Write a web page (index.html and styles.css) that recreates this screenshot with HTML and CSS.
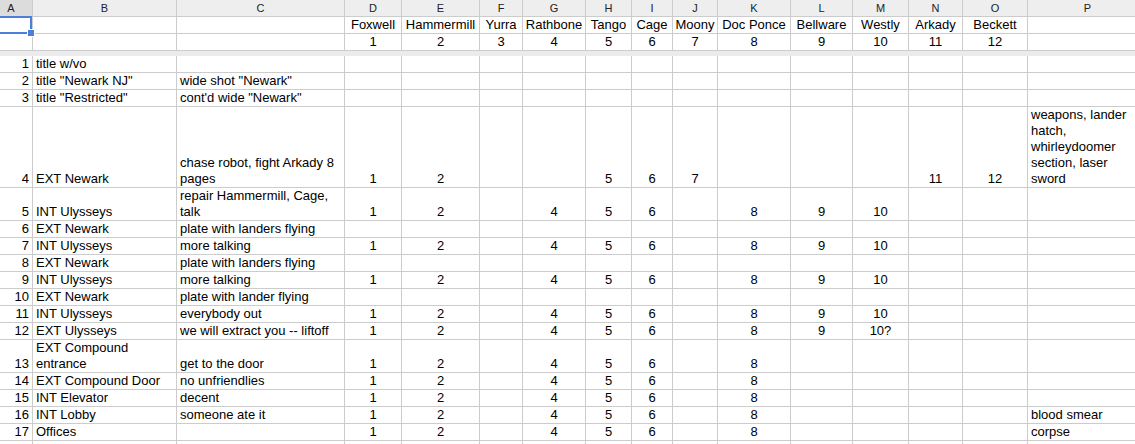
FILE: index.html
```html
<!DOCTYPE html>
<html>
<head>
<meta charset="utf-8">
<title>Scenes</title>
<link rel="stylesheet" href="styles.css">
</head>
<body>
<div class="sheet">
  <div class="h h-sel">A</div><div class="h">B</div><div class="h">C</div><div class="h">D</div><div class="h">E</div><div class="h">F</div><div class="h">G</div><div class="h">H</div><div class="h">I</div><div class="h">J</div><div class="h">K</div><div class="h">L</div><div class="h">M</div><div class="h">N</div><div class="h">O</div><div class="h">P</div>

  <div class="c sel-cell"><span class="sel"><span class="handle"></span></span></div><div class="c"></div><div class="c"></div>
  <div class="c m">Foxwell</div><div class="c m">Hammermill</div><div class="c m">Yurra</div><div class="c m">Rathbone</div><div class="c m">Tango</div><div class="c m">Cage</div><div class="c m">Moony</div><div class="c m">Doc Ponce</div><div class="c m">Bellware</div><div class="c m">Westly</div><div class="c m">Arkady</div><div class="c m">Beckett</div><div class="c"></div>

  <div class="c"></div><div class="c"></div><div class="c"></div>
  <div class="c m">1</div><div class="c m">2</div><div class="c m">3</div><div class="c m">4</div><div class="c m">5</div><div class="c m">6</div><div class="c m">7</div><div class="c m">8</div><div class="c m">9</div><div class="c m">10</div><div class="c m">11</div><div class="c m">12</div><div class="c"></div>

  <div class="freeze"></div>

  <div class="c r">1</div><div class="c">title w/vo</div><div class="c"></div>
  <div class="c m"></div><div class="c m"></div><div class="c m"></div><div class="c m"></div><div class="c m"></div><div class="c m"></div><div class="c m"></div><div class="c m"></div><div class="c m"></div><div class="c m"></div><div class="c m"></div><div class="c m"></div><div class="c"></div>

  <div class="c r">2</div><div class="c">title "Newark NJ"</div><div class="c">wide shot "Newark"</div>
  <div class="c m"></div><div class="c m"></div><div class="c m"></div><div class="c m"></div><div class="c m"></div><div class="c m"></div><div class="c m"></div><div class="c m"></div><div class="c m"></div><div class="c m"></div><div class="c m"></div><div class="c m"></div><div class="c"></div>

  <div class="c r">3</div><div class="c">title "Restricted"</div><div class="c">cont'd wide "Newark"</div>
  <div class="c m"></div><div class="c m"></div><div class="c m"></div><div class="c m"></div><div class="c m"></div><div class="c m"></div><div class="c m"></div><div class="c m"></div><div class="c m"></div><div class="c m"></div><div class="c m"></div><div class="c m"></div><div class="c"></div>

  <div class="c r">4</div><div class="c">EXT Newark</div><div class="c"><span>chase robot, fight Arkady 8<br>pages</span></div>
  <div class="c m">1</div><div class="c m">2</div><div class="c m"></div><div class="c m"></div><div class="c m">5</div><div class="c m">6</div><div class="c m">7</div><div class="c m"></div><div class="c m"></div><div class="c m"></div><div class="c m">11</div><div class="c m">12</div><div class="c"><span>weapons, lander<br>hatch,<br>whirleydoomer<br>section, laser<br>sword</span></div>

  <div class="c r">5</div><div class="c">INT Ulysseys</div><div class="c"><span>repair Hammermill, Cage,<br>talk</span></div>
  <div class="c m">1</div><div class="c m">2</div><div class="c m"></div><div class="c m">4</div><div class="c m">5</div><div class="c m">6</div><div class="c m"></div><div class="c m">8</div><div class="c m">9</div><div class="c m">10</div><div class="c m"></div><div class="c m"></div><div class="c"></div>

  <div class="c r">6</div><div class="c">EXT Newark</div><div class="c">plate with landers flying</div>
  <div class="c m"></div><div class="c m"></div><div class="c m"></div><div class="c m"></div><div class="c m"></div><div class="c m"></div><div class="c m"></div><div class="c m"></div><div class="c m"></div><div class="c m"></div><div class="c m"></div><div class="c m"></div><div class="c"></div>

  <div class="c r">7</div><div class="c">INT Ulysseys</div><div class="c">more talking</div>
  <div class="c m">1</div><div class="c m">2</div><div class="c m"></div><div class="c m">4</div><div class="c m">5</div><div class="c m">6</div><div class="c m"></div><div class="c m">8</div><div class="c m">9</div><div class="c m">10</div><div class="c m"></div><div class="c m"></div><div class="c"></div>

  <div class="c r">8</div><div class="c">EXT Newark</div><div class="c">plate with landers flying</div>
  <div class="c m"></div><div class="c m"></div><div class="c m"></div><div class="c m"></div><div class="c m"></div><div class="c m"></div><div class="c m"></div><div class="c m"></div><div class="c m"></div><div class="c m"></div><div class="c m"></div><div class="c m"></div><div class="c"></div>

  <div class="c r">9</div><div class="c">INT Ulysseys</div><div class="c">more talking</div>
  <div class="c m">1</div><div class="c m">2</div><div class="c m"></div><div class="c m">4</div><div class="c m">5</div><div class="c m">6</div><div class="c m"></div><div class="c m">8</div><div class="c m">9</div><div class="c m">10</div><div class="c m"></div><div class="c m"></div><div class="c"></div>

  <div class="c r">10</div><div class="c">EXT Newark</div><div class="c">plate with lander flying</div>
  <div class="c m"></div><div class="c m"></div><div class="c m"></div><div class="c m"></div><div class="c m"></div><div class="c m"></div><div class="c m"></div><div class="c m"></div><div class="c m"></div><div class="c m"></div><div class="c m"></div><div class="c m"></div><div class="c"></div>

  <div class="c r">11</div><div class="c">INT Ulysseys</div><div class="c">everybody out</div>
  <div class="c m">1</div><div class="c m">2</div><div class="c m"></div><div class="c m">4</div><div class="c m">5</div><div class="c m">6</div><div class="c m"></div><div class="c m">8</div><div class="c m">9</div><div class="c m">10</div><div class="c m"></div><div class="c m"></div><div class="c"></div>

  <div class="c r">12</div><div class="c">EXT Ulysseys</div><div class="c">we will extract you -- liftoff</div>
  <div class="c m">1</div><div class="c m">2</div><div class="c m"></div><div class="c m">4</div><div class="c m">5</div><div class="c m">6</div><div class="c m"></div><div class="c m">8</div><div class="c m">9</div><div class="c m">10?</div><div class="c m"></div><div class="c m"></div><div class="c"></div>

  <div class="c r">13</div><div class="c"><span>EXT Compound<br>entrance</span></div><div class="c">get to the door</div>
  <div class="c m">1</div><div class="c m">2</div><div class="c m"></div><div class="c m">4</div><div class="c m">5</div><div class="c m">6</div><div class="c m"></div><div class="c m">8</div><div class="c m"></div><div class="c m"></div><div class="c m"></div><div class="c m"></div><div class="c"></div>

  <div class="c r">14</div><div class="c">EXT Compound Door</div><div class="c">no unfriendlies</div>
  <div class="c m">1</div><div class="c m">2</div><div class="c m"></div><div class="c m">4</div><div class="c m">5</div><div class="c m">6</div><div class="c m"></div><div class="c m">8</div><div class="c m"></div><div class="c m"></div><div class="c m"></div><div class="c m"></div><div class="c"></div>

  <div class="c r">15</div><div class="c">INT Elevator</div><div class="c">decent</div>
  <div class="c m">1</div><div class="c m">2</div><div class="c m"></div><div class="c m">4</div><div class="c m">5</div><div class="c m">6</div><div class="c m"></div><div class="c m">8</div><div class="c m"></div><div class="c m"></div><div class="c m"></div><div class="c m"></div><div class="c"></div>

  <div class="c r">16</div><div class="c">INT Lobby</div><div class="c">someone ate it</div>
  <div class="c m">1</div><div class="c m">2</div><div class="c m"></div><div class="c m">4</div><div class="c m">5</div><div class="c m">6</div><div class="c m"></div><div class="c m">8</div><div class="c m"></div><div class="c m"></div><div class="c m"></div><div class="c m"></div><div class="c">blood smear</div>

  <div class="c r">17</div><div class="c">Offices</div><div class="c"></div>
  <div class="c m">1</div><div class="c m">2</div><div class="c m"></div><div class="c m">4</div><div class="c m">5</div><div class="c m">6</div><div class="c m"></div><div class="c m">8</div><div class="c m"></div><div class="c m"></div><div class="c m"></div><div class="c m"></div><div class="c">corpse</div>

  <div class="c r"></div><div class="c"></div><div class="c"></div>
  <div class="c m"></div><div class="c m"></div><div class="c m"></div><div class="c m"></div><div class="c m"></div><div class="c m"></div><div class="c m"></div><div class="c m"></div><div class="c m"></div><div class="c m"></div><div class="c m"></div><div class="c m"></div><div class="c"></div>
</div>
</body>
</html>
```
FILE: styles.css
```css
html, body {
  margin: 0;
  padding: 0;
  background: #ffffff;
  overflow: hidden;
}

body {
  width: 1135px;
  height: 444px;
  font-family: "Liberation Sans", Arial, sans-serif;
  font-size: 13px;
  color: #000000;
}

.sheet {
  display: grid;
  grid-template-columns: 43px 144px 168px 57px 78px 43px 63px 46px 41px 45px 73px 62px 56px 54px 65px 120px;
  margin-left: -10px;
  width: 1158px;
}

.h {
  box-sizing: border-box;
  height: 17px;
  background: #eeeeee;
  border-right: 1px solid #cccccc;
  border-bottom: 1px solid #cccccc;
  font-size: 11px;
  line-height: 16px;
  text-align: center;
  color: #222222;
}

.h-sel {
  background: #dcdcdc;
}

.c {
  box-sizing: border-box;
  min-height: 17px;
  border-right: 1px solid #cccccc;
  border-bottom: 1px solid #cccccc;
  padding: 0 3px;
  display: flex;
  align-items: flex-end;
  line-height: 16px;
  white-space: nowrap;
  overflow: hidden;
}

.c.m {
  justify-content: center;
  text-align: center;
}

.c.r {
  justify-content: flex-end;
  padding-right: 3px;
}

.freeze {
  grid-column: 1 / -1;
  height: 5px;
  background: #ebebeb;
}

.sel-cell {
  position: relative;
  overflow: visible;
}

.sel {
  position: absolute;
  top: -1px;
  left: 0;
  right: 0;
  bottom: -1px;
  border: 2px solid #4a7fdc;
  pointer-events: none;
}

.handle {
  position: absolute;
  right: -5px;
  bottom: -5px;
  width: 6px;
  height: 6px;
  background: #4a7fdc;
  border: 1px solid #ffffff;
}
```
